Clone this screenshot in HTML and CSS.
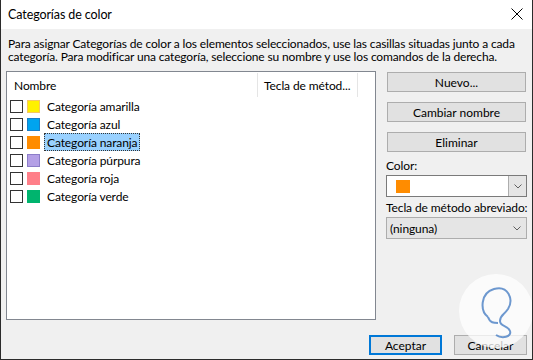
FILE: index.html
```html
<!DOCTYPE html>
<html lang="es">
<head>
  <meta charset="UTF-8" />
  <title>Categorías de color</title>
  <link rel="stylesheet" href="styles.css">
</head>
<body>

  <div class="dialog">
    <div class="titlebar">
      <span class="title">Categorías de color</span>
      <svg class="close" width="12" height="12" viewBox="0 0 12 12">
        <path d="M0.5 0.5 L11.5 11.5 M11.5 0.5 L0.5 11.5" stroke="#000" stroke-width="1" fill="none"/>
      </svg>
    </div>

    <div class="content">
      <p class="intro">Para asignar Categorías de color a los elementos seleccionados, use las casillas situadas junto a cada categoría. Para modificar una categoría, seleccione su nombre y use los comandos de la derecha.</p>

      <div class="main">
        <div class="listbox">
          <div class="list-head">
            <div class="col col-name">Nombre</div>
            <div class="col col-key">Tecla de métod...</div>
          </div>
          <ul class="cat-list">
            <li><span class="check"></span><span class="swatch yellow"></span><span class="label">Categoría amarilla</span></li>
            <li><span class="check"></span><span class="swatch blue"></span><span class="label">Categoría azul</span></li>
            <li><span class="check"></span><span class="swatch orange"></span><span class="label selected">Categoría naranja</span></li>
            <li><span class="check"></span><span class="swatch purple"></span><span class="label">Categoría púrpura</span></li>
            <li><span class="check"></span><span class="swatch red"></span><span class="label">Categoría roja</span></li>
            <li><span class="check"></span><span class="swatch green"></span><span class="label">Categoría verde</span></li>
          </ul>
        </div>

        <div class="side">
          <button class="btn">Nuevo...</button>
          <button class="btn">Cambiar nombre</button>
          <button class="btn">Eliminar</button>

          <label class="field-label">Color:</label>
          <div class="combo color-combo">
            <span class="combo-value"><span class="swatch-big"></span></span>
            <span class="combo-btn">
              <svg width="8" height="5" viewBox="0 0 8 5"><path d="M0.5 0.5 L4 4 L7.5 0.5" stroke="#606060" fill="none"/></svg>
            </span>
          </div>

          <label class="field-label">Tecla de método abreviado:</label>
          <div class="combo key-combo">
            <span class="combo-value">(ninguna)</span>
            <span class="combo-arrow">
              <svg width="8" height="5" viewBox="0 0 8 5"><path d="M0.5 0.5 L4 4 L7.5 0.5" stroke="#606060" fill="none"/></svg>
            </span>
          </div>
        </div>
      </div>

      <div class="footer">
        <button class="btn btn-default">Aceptar</button>
        <button class="btn">Cancelar</button>
      </div>
    </div>

    <!-- watermark -->
    <svg class="watermark" width="76" height="76" viewBox="0 0 76 76">
      <circle cx="38" cy="38" r="37" fill="#ffffff" fill-opacity="0.75"/>
      <path d="M30 44 C22 38 22 20 36 16 C50 12 56 26 50 36 C46 42 42 42 42 48 C42 54 50 52 52 58 C54 64 44 66 38 62"
            stroke="#4a7fc4" stroke-width="2" fill="none" stroke-opacity="0.8"/>
      <path d="M30 44 C32 50 36 50 40 50" stroke="#4a7fc4" stroke-width="2" fill="none" stroke-opacity="0.8"/>
    </svg>
  </div>

</body>
</html>
```

FILE: styles.css
```css
/* Reset & basics */
* {
  box-sizing: border-box;
  font-family: 'Segoe UI', Lato, 'Liberation Sans', sans-serif;
}
body {
  margin: 0;
  padding: 0;
  background: #fff;
  color: #000;
  font-size: 12px;
  letter-spacing: -0.1px;
}

/* Dialog frame */
.dialog {
  position: relative;
  width: 533px;
  height: 360px;
  border: 1px solid #2b2b2b;
  border-top: none;
  display: flex;
  flex-direction: column;
  overflow: hidden;
}

/* Title bar */
.titlebar {
  height: 29px;
  background: #fff;
  display: flex;
  align-items: center;
  justify-content: space-between;
  padding: 0 9px 0 7px;
}
.title {
  font-size: 12.5px;
  margin-top: -1px;
}
.close {
  display: block;
  margin-top: -1px;
}

/* Content area */
.content {
  flex: 1;
  background: #f0f0f0;
  padding: 8px 5px 4px 5px;
  display: flex;
  flex-direction: column;
}
.intro {
  margin: 0 -5px 8px 2px;
  line-height: 13px;
  letter-spacing: -0.15px;
}

.main {
  display: flex;
  gap: 10px;
}

/* List box */
.listbox {
  width: 370px;
  height: 249px;
  background: #fff;
  border: 1px solid #828790;
}
.list-head {
  display: flex;
  height: 24px;
  margin-top: 1px;
  align-items: stretch;
}
.col {
  display: flex;
  align-items: center;
  padding-left: 7px;
  border-right: 1px solid #e5e5e5;
}
.col-name {
  width: 251px;
}
.col-key {
  width: 100px;
  padding-left: 6px;
}

.cat-list {
  list-style: none;
  margin: 0;
  padding: 0;
}
.cat-list li {
  height: 18px;
  display: flex;
  align-items: center;
  padding-left: 3px;
}
.check {
  width: 13px;
  height: 13px;
  border: 1px solid #333;
  background: #fff;
}
.swatch {
  width: 13px;
  height: 13px;
  margin-left: 4px;
  border: 1px solid transparent;
}
.yellow { background: #fff100; border-color: #f6c760; }
.blue { background: #00a4ef; border-color: #1a7ec6; }
.orange { background: #ff8c00; border-color: #ff8c00; }
.purple { background: #b4a0e6; border-color: #8c7dc8; }
.red { background: #ff7f89; border-color: #ff7f89; }
.green { background: #00b46e; border-color: #00b46e; }

.label {
  height: 18px;
  display: flex;
  align-items: center;
  margin-left: 4px;
  padding: 0 2px;
  border: 1px dotted transparent;
}
.label.selected {
  background: #99d1ff;
  border-color: #333;
}

/* Right column */
.side {
  width: 141px;
  display: flex;
  flex-direction: column;
}
.btn {
  height: 20px;
  background: #e1e1e1;
  border: 1px solid #adadad;
  font-size: 12px;
  color: #000;
  padding: 0;
}
.side .btn {
  margin: 1px 1px 9px 1px;
}
.side .btn + .btn + .btn {
  margin-bottom: 5px;
}
.field-label {
  height: 16px;
  display: flex;
  align-items: center;
  margin-bottom: 2px;
  white-space: nowrap;
}

.combo {
  height: 22px;
  display: flex;
  align-items: stretch;
  margin-bottom: 2px;
}
.color-combo {
  background: #fff;
  border: 1px solid #7a7a7a;
}
.combo-value {
  flex: 1;
  display: flex;
  align-items: center;
  padding-left: 9px;
}
.swatch-big {
  width: 14px;
  height: 13px;
  background: #ff8c00;
}
.combo-btn {
  width: 18px;
  background: #e5e5e5;
  border-left: 1px solid #adadad;
  display: flex;
  align-items: center;
  justify-content: center;
}
.key-combo {
  background: #e5e5e5;
  border: 1px solid #adadad;
}
.key-combo .combo-value {
  padding-left: 3px;
}
.combo-arrow {
  width: 18px;
  display: flex;
  align-items: center;
  justify-content: center;
}

/* Footer buttons */
.footer {
  display: flex;
  justify-content: flex-end;
  gap: 12px;
  margin-top: auto;
}
.footer .btn {
  width: 73px;
}
.btn-default {
  border: 2px solid #0078d7;
}

/* Watermark overlay */
.watermark {
  position: absolute;
  right: -2px;
  bottom: 10px;
}
```
